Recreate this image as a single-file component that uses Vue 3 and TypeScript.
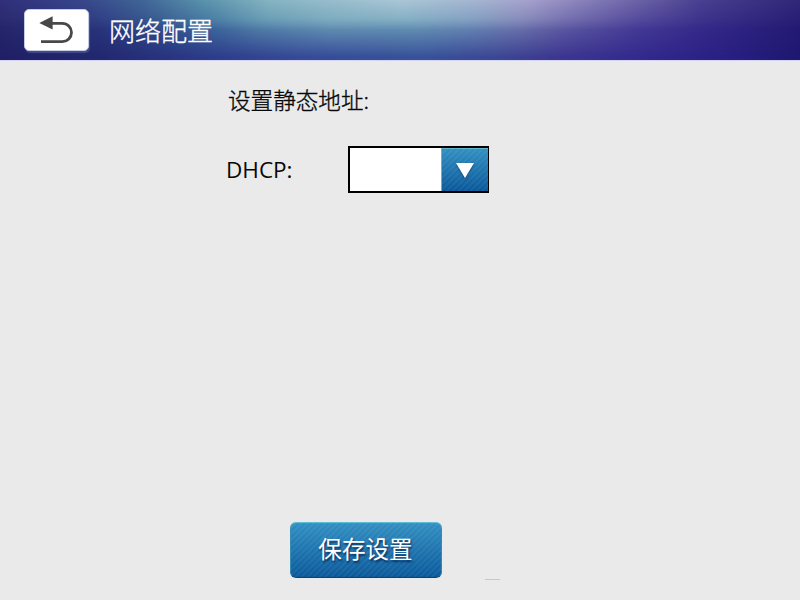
<script setup lang="ts">
import { ref } from 'vue'

const title = ref('网络配置')
const dhcp = ref('')
</script>

<template>
  <div class="screen">
    <header class="bar">
      <button class="back" aria-label="返回">
        <svg width="34" height="28" viewBox="0 0 34 28">
          <path d="M12 7.3H23.3A9.2 9.2 0 0 1 23.3 25.7H2" fill="none" stroke="#484848" stroke-width="2.8" />
          <path d="M0.3 7L13.6 0.2V13.6Z" fill="#484848" />
        </svg>
      </button>
      <h1 class="title">{{ title }}</h1>
    </header>
    <main class="form">
      <p class="heading">设置静态地址:</p>
      <div class="row">
        <label class="label">DHCP:</label>
        <div class="select">
          <span class="value">{{ dhcp }}</span>
          <button class="drop" aria-label="DHCP">
            <svg width="20" height="17" viewBox="0 0 20 17">
              <path d="M1 1H19L10 16Z" fill="#fff" />
            </svg>
          </button>
        </div>
      </div>
    </main>
    <footer class="actions">
      <button class="save">保存设置</button>
      <span class="dash"></span>
    </footer>
  </div>
</template>

<style>
body {
  margin: 0;
}
</style>

<style scoped>
.screen {
  width: 800px;
  height: 600px;
  overflow: hidden;
  display: flex;
  flex-direction: column;
  background: #eaeaea;
  font-family: "Noto Sans", "Noto Sans CJK SC", sans-serif;
  color: #080808;
}
button {
  border: 0;
  padding: 0;
  font: inherit;
}
.bar {
  position: relative;
  isolation: isolate;
  box-sizing: border-box;
  height: 60px;
  flex: none;
  display: flex;
  align-items: flex-start;
  padding: 9px 0 0 24px;
  background: linear-gradient(90deg, #201f66, #22286f 100px, #2c3a88 200px, #364a98 300px, #38529a 420px, #3c4694 500px, #3c3690 560px, #32288c 650px, #2a2084 720px, #1e1870);
  box-shadow: 0 1px 0 #d4d4f0;
}
.bar::before,
.bar::after {
  content: "";
  position: absolute;
  inset: 0;
  z-index: -1;
}
.bar::before {
  background: linear-gradient(90deg, #28286c, #2b3880 100px, #34548e 160px, #4070a0 210px, #5a90ae 260px, #70a4ba 330px, #70a4ba 410px, #7296bb 470px, #7880b2 520px, #6460a6 570px, #483e98 640px, #352a88 710px, #241a74);
  mask-image: linear-gradient(#000 18px, transparent 57px);
}
.bar::after {
  background: linear-gradient(90deg, #30307a, #38468a 80px, #406496 140px, #5a94ac 205px, #86b4c2 270px, #aac6d6 400px, #a5b4d0 480px, #a5a0cc 530px, #8078b4 600px, #4a4090 700px, #302878);
  mask-image: linear-gradient(#000, transparent 30px);
}
.back {
  width: 65px;
  height: 42px;
  display: flex;
  justify-content: center;
  align-items: flex-start;
  padding: 6px 2px 0 0;
  box-sizing: border-box;
  border-radius: 5px;
  background: #fff;
  border: 1px solid #c5cbe0;
  box-shadow: 1px 2px 1px rgba(110, 120, 170, 0.45);
}
.title {
  margin: 4px 0 0 20px;
  font-size: 26px;
  line-height: 36px;
  font-weight: 300;
  color: #fff;
  -webkit-text-stroke: 0.35px #fff;
}
.form {
  flex: 1;
  padding: 25px 0 0 228px;
}
.heading {
  margin: 0;
  font-size: 22.6px;
  line-height: 32px;
  font-weight: 300;
  -webkit-text-stroke: 0.35px #080808;
}
.row {
  margin: 29px 0 0 -2px;
  display: flex;
  align-items: center;
}
.label {
  width: 122px;
  font-family: "Open Sans", "Noto Sans", sans-serif;
  font-size: 22.5px;
  line-height: 46px;
}
.select {
  box-sizing: border-box;
  width: 141px;
  height: 47px;
  display: flex;
  border: 2px solid #000;
  border-right-width: 1px;
  background: #fff;
}
.value {
  flex: 1;
}
.drop,
.save {
  background:
    repeating-linear-gradient(135deg, rgba(255, 255, 255, 0.055) 0 1.6px, transparent 2.2px 3.6px, rgba(255, 255, 255, 0.055) 4.2px),
    linear-gradient(#3290c2, #09589a);
}
.drop {
  width: 47px;
  display: flex;
  align-items: center;
  justify-content: center;
  box-shadow: inset 1px 1px 0 #5fb4d0;
}
.drop svg {
  margin: 1px 0 0 1px;
  filter: drop-shadow(0 1px 1px rgba(0, 30, 70, 0.5));
}
.actions {
  flex: none;
  height: 78px;
  display: flex;
  padding-left: 290px;
}
.save {
  width: 152px;
  height: 56px;
  padding: 0 1px 2px 0;
  border-radius: 6px;
  color: #fff;
  font-size: 23.6px;
  line-height: 52px;
  font-weight: 400;
  text-shadow: 1px 2px 2px rgba(0, 25, 65, 0.75);
  box-shadow: inset 0 1px 1px #62c0d6, inset 0 -1px 1px #0a406c, inset 1px 0 1px #3d8fb8, inset -1px 0 1px #3d8fb8;
}
.dash {
  width: 15px;
  height: 1px;
  margin: 57px 0 0 43px;
  background: #c3c9d0;
}
</style>
